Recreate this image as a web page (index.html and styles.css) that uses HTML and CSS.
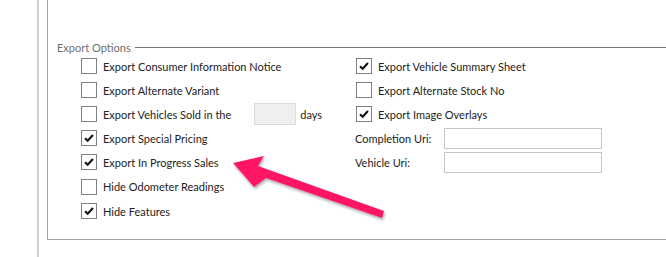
FILE: index.html
```html
<!DOCTYPE html>
<html lang="en">
<head>
    <meta charset="UTF-8">
    <meta name="viewport" content="width=device-width, initial-scale=1.0">
    <title>Export Options</title>
    <link rel="stylesheet" href="styles.css">
</head>
<body>
    <div class="outer">
        <div class="panel">
            <div class="legend">
                <span class="legend-text">Export Options</span>
                <span class="legend-line"></span>
            </div>
            <div class="options">
                <div class="col col-left">
                    <div class="row"><span class="box"></span>Export Consumer Information Notice</div>
                    <div class="row"><span class="box"></span>Export Alternate Variant</div>
                    <div class="row"><span class="box"></span>Export Vehicles Sold in the <span class="days-input"></span> days</div>
                    <div class="row"><span class="box checked"><svg viewBox="0 0 16 16"><path d="M3.5 8.2 L6.5 11.2 L12.5 4.5"/></svg></span>Export Special Pricing</div>
                    <div class="row"><span class="box checked"><svg viewBox="0 0 16 16"><path d="M3.5 8.2 L6.5 11.2 L12.5 4.5"/></svg></span>Export In Progress Sales</div>
                    <div class="row tall"><span class="box"></span>Hide Odometer Readings</div>
                    <div class="row"><span class="box checked"><svg viewBox="0 0 16 16"><path d="M3.5 8.2 L6.5 11.2 L12.5 4.5"/></svg></span>Hide Features</div>
                </div>
                <div class="col col-right">
                    <div class="row"><span class="box checked"><svg viewBox="0 0 16 16"><path d="M3.5 8.2 L6.5 11.2 L12.5 4.5"/></svg></span>Export Vehicle Summary Sheet</div>
                    <div class="row"><span class="box"></span>Export Alternate Stock No</div>
                    <div class="row"><span class="box checked"><svg viewBox="0 0 16 16"><path d="M3.5 8.2 L6.5 11.2 L12.5 4.5"/></svg></span>Export Image Overlays</div>
                    <div class="row field"><span class="field-label">Completion Uri:</span><span class="text-input"></span></div>
                    <div class="row field"><span class="field-label">Vehicle Uri:</span><span class="text-input"></span></div>
                </div>
            </div>
        </div>
    </div>

    <!-- annotation arrow -->
    <svg class="arrow" width="666" height="257" viewBox="0 0 666 257">
        <defs>
            <filter id="shadow" x="-10%" y="-10%" width="130%" height="130%">
                <feDropShadow dx="1" dy="2" stdDeviation="1.5" flood-color="#000" flood-opacity="0.35"/>
            </filter>
        </defs>
        <polygon points="233,163 264,156 258,166 384,211 382,218 266,178 254,187" fill="#fe1763" filter="url(#shadow)"/>
    </svg>
</body>
</html>
```

FILE: styles.css
```css
body {
    margin: 0;
    font-family: Lato, "Liberation Sans", sans-serif;
    font-size: 11px;
    color: #222;
    background: #fff;
}
.outer {
    margin-left: 37px;
    border-left: 2px solid #cfcfcf;
    padding-left: 8px;
    height: 257px;
}
.panel {
    border-left: 1px solid #a0a0a0;
    border-bottom: 1px solid #a0a0a0;
    height: 239px;
}
.legend {
    display: flex;
    align-items: center;
    padding-top: 40px;
    height: 14px;
    margin-left: 9px;
}
.legend-text {
    color: #707070;
    white-space: nowrap;
}
.legend-line {
    flex: 1;
    height: 1px;
    background: #777;
    margin-left: 4px;
}
.options {
    display: flex;
    padding-left: 33px;
}
.col-left {
    width: 275px;
}
.row {
    display: flex;
    align-items: center;
    height: 24px;
    white-space: nowrap;
}
.row.tall {
    height: 25px;
}
.box {
    width: 16px;
    height: 16px;
    box-sizing: border-box;
    border: 1px solid #808080;
    margin-right: 6px;
    flex: none;
    display: flex;
}
.box svg {
    width: 14px;
    height: 14px;
}
.box path {
    fill: none;
    stroke: #111;
    stroke-width: 2.4;
}
.days-input {
    display: inline-block;
    width: 42px;
    height: 22px;
    box-sizing: border-box;
    background: #efefef;
    border: 1px solid #dcdcdc;
    margin: 0 4px 0 23px;
}
.field-label {
    width: 89px;
    margin-left: -1px;
}
.text-input {
    width: 158px;
    height: 21px;
    box-sizing: border-box;
    border: 1px solid #c6c6c6;
}
.arrow {
    position: absolute;
    left: 0;
    top: 0;
    pointer-events: none;
}
```
